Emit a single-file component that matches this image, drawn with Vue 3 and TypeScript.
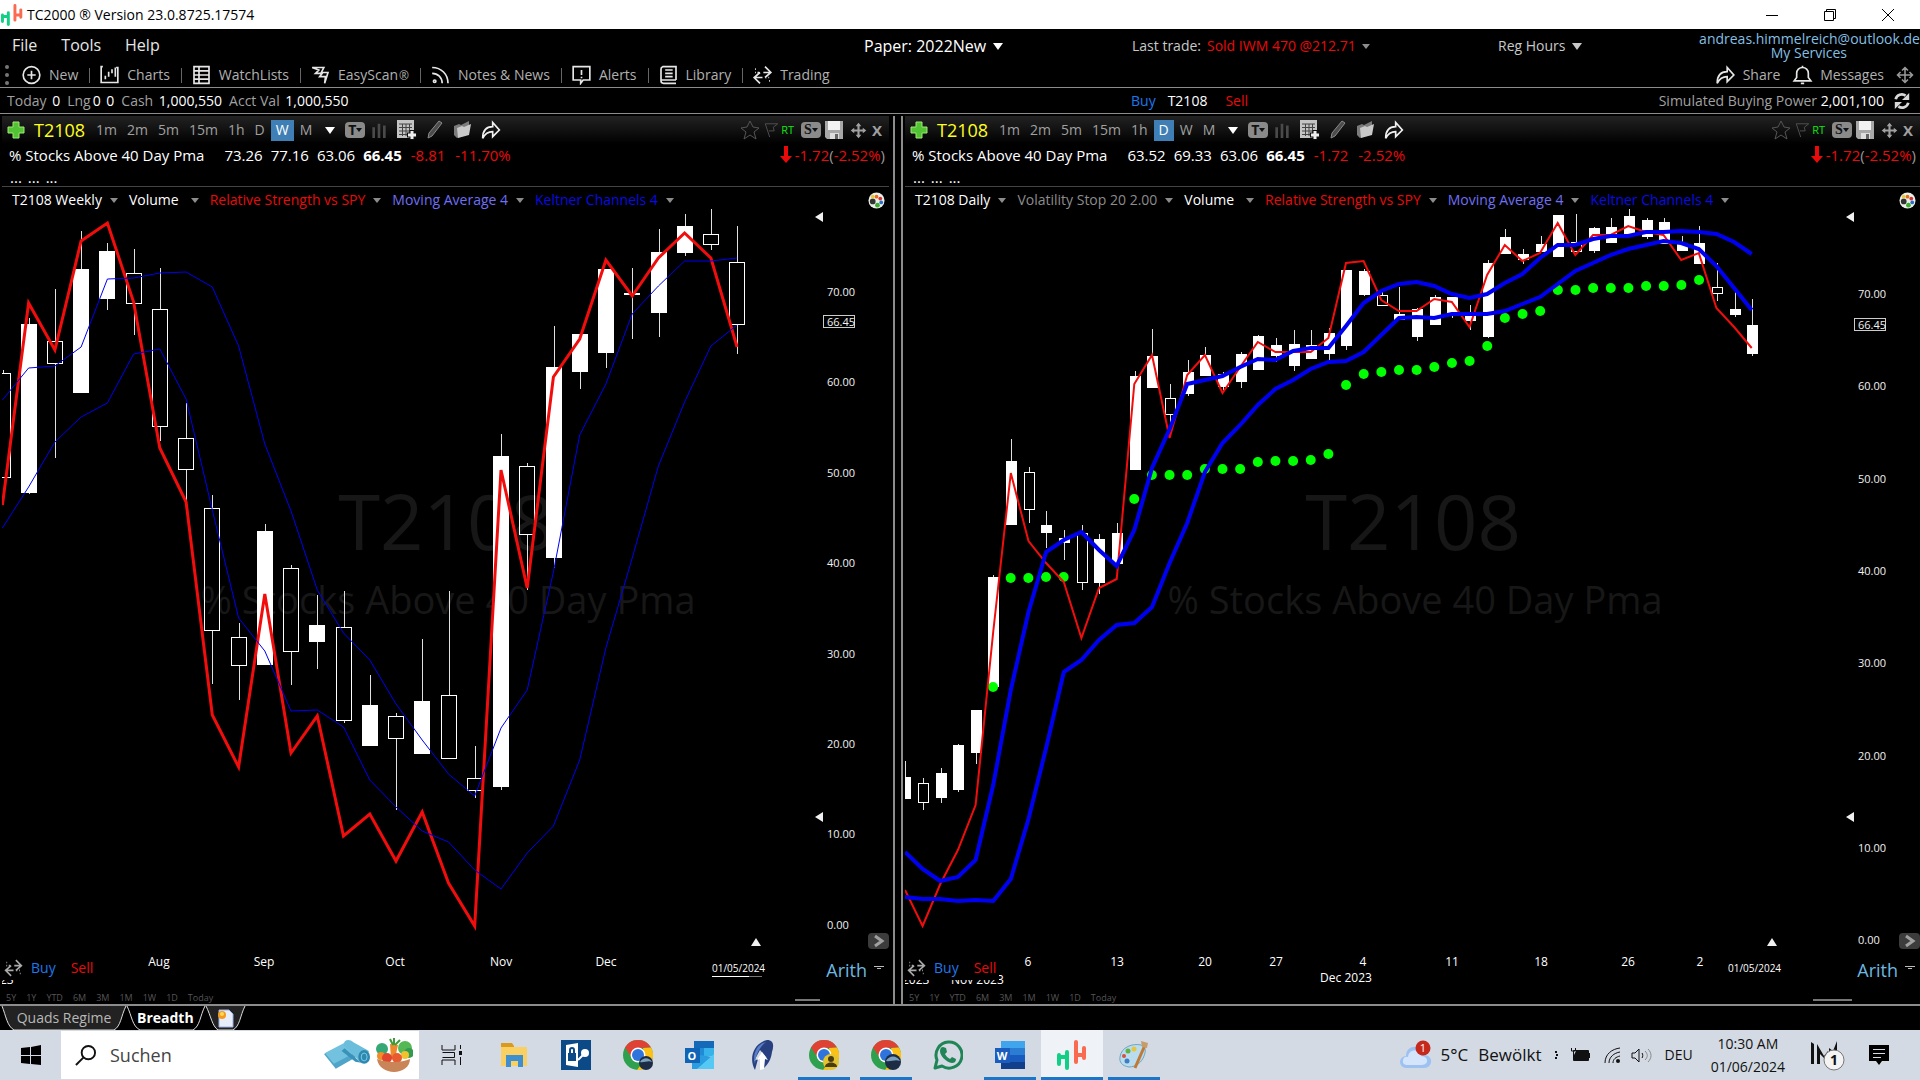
<script setup lang="ts">
type Candle = [high: number, top: number, bottom: number, low: number, hollow: 0 | 1]
interface Tick { at: number; text: string }
interface Legend { text: string; color: string; wide?: boolean }
interface Panel {
  id: string
  side: 'left' | 'right'
  active: string
  quotes: string[]
  last: string
  change: string[]
  legend: Legend[]
  view: string
  origin: number
  step: number
  body: number
  candles: Candle[]
  strength: string
  bands: string[]
  bandWidth: number
  strengthWidth: number
  stops: [number, number][]
  mark: { x: number; sub: number }
  axisX: number
  axis: Tick[]
  lastY: number
  dates: Tick[]
  month?: Tick
  cut: Tick[]
  dateX: number
  handle: { x: number; w: number }
}

const frames = ['1m', '2m', '5m', '15m', '1h', 'D', 'W', 'M']
const ranges = ['5Y', '1Y', 'YTD', '6M', '3M', '1M', '1W', '1D', 'Today']

/* Joins a list of heights to evenly spaced x positions. */
function line(origin: number, step: number, ys: number[]): string {
  return ys.map((y, i) => `${(origin + i * step).toFixed(1)},${y}`).join(' ')
}
function scale(first: number, gap: number): Tick[] {
  return [70, 60, 50, 40, 30, 20, 10, 0].map((v, i) => ({ at: Math.round(first + gap * i), text: v.toFixed(2) }))
}

const weekly: Candle[] = [
  [370, 373, 477, 477, 1], [318, 324, 493, 494, 0], [289, 341, 363, 458, 1], [231, 269, 393, 393, 0],
  [243, 251, 299, 310, 0], [249, 273, 303, 335, 1], [268, 309, 426, 441, 1], [403, 438, 469, 505, 1],
  [495, 508, 630, 684, 1], [623, 637, 665, 700, 1], [524, 531, 665, 665, 0], [565, 568, 651, 685, 1],
  [595, 625, 642, 669, 0], [591, 627, 720, 723, 1], [675, 705, 746, 746, 0], [713, 716, 738, 810, 1],
  [639, 701, 754, 754, 0], [591, 695, 758, 758, 1], [746, 778, 790, 798, 1], [434, 456, 787, 790, 0],
  [463, 466, 534, 590, 1], [326, 367, 558, 568, 0], [334, 334, 372, 389, 0], [269, 269, 353, 368, 0],
  [268, 293, 295, 339, 0], [229, 252, 313, 337, 0], [214, 226, 253, 256, 0], [209, 234, 244, 250, 1],
  [226, 262, 324, 354, 1],
]
const daily: Candle[] = [
  [761, 777, 799, 799, 0], [778, 783, 802, 810, 1], [768, 773, 798, 803, 0], [744, 745, 790, 792, 0],
  [710, 710, 753, 764, 0], [575, 577, 687, 687, 0], [439, 461, 525, 525, 0], [467, 472, 509, 523, 1],
  [511, 525, 533, 548, 0], [530, 538, 543, 560, 0], [525, 533, 582, 590, 1], [534, 539, 583, 594, 0],
  [523, 533, 564, 564, 0], [371, 376, 470, 470, 0], [329, 356, 388, 388, 0], [384, 398, 414, 429, 1],
  [360, 372, 394, 396, 0], [347, 355, 376, 376, 0], [372, 374, 387, 390, 0], [352, 354, 382, 388, 0],
  [335, 336, 370, 370, 0], [338, 345, 356, 362, 0], [330, 344, 366, 371, 0], [330, 345, 359, 359, 0],
  [328, 333, 354, 363, 0], [270, 270, 346, 350, 0], [269, 271, 295, 296, 0], [290, 295, 305, 306, 1],
  [287, 314, 320, 320, 0], [308, 309, 337, 341, 0], [295, 297, 325, 325, 0], [297, 297, 316, 318, 0],
  [305, 313, 321, 330, 0], [260, 263, 337, 338, 0], [229, 237, 254, 254, 0], [249, 254, 260, 264, 0],
  [236, 244, 252, 252, 0], [215, 215, 257, 257, 0], [214, 242, 251, 252, 1], [227, 228, 251, 253, 0],
  [218, 227, 243, 243, 0], [209, 216, 235, 235, 0], [218, 220, 237, 239, 0], [218, 222, 244, 244, 0],
  [236, 243, 251, 251, 0], [226, 243, 264, 264, 0], [263, 287, 293, 301, 1], [291, 309, 315, 317, 0],
  [299, 325, 354, 356, 0],
]
const stopYs: (number | null)[] = [
  null, null, null, null, null, 687, 578, 578, 577, 577, null, null, null, 499, 475, 475, 475, 469, 469, 469,
  462, 461, 461, 460, 454, 385, 374, 372, 370, 370, 367, 363, 361, 346, 318, 314, 311, 290, 290, 288, 288, 288,
  286, 286, 285, 280,
]
const stops = stopYs
  .map((y, i): [number, number | null] => [904.8 + i * 17.65, y])
  .filter((p): p is [number, number] => p[1] !== null)

const W = { o: 2.4, s: 26.24 }
const D = { o: 905, s: 17.64 }

const panels: Panel[] = [
  {
    id: 'weekly', side: 'left', active: 'W',
    quotes: ['73.26', '77.16', '63.06'], last: '66.45', change: ['-8.81', '-11.70%'],
    legend: [
      { text: 'T2108 Weekly', color: '#ffffff' },
      { text: 'Volume', color: '#ffffff', wide: true },
      { text: 'Relative Strength vs SPY', color: '#ea0a0a' },
      { text: 'Moving Average 4', color: '#6f6ff5' },
      { text: 'Keltner Channels 4', color: '#0a0ae6' },
    ],
    view: '2 209 887 795', origin: 3, step: W.s, body: 16, candles: weekly,
    strength: line(W.o, W.s, [505, 303, 350, 241, 223, 302, 448, 502, 715, 767, 594, 753, 716, 836, 814, 861, 812, 883, 926, 470, 588, 377, 339, 260, 296, 258, 233, 258, 347]),
    bands: [
      line(W.o, W.s, [400, 368, 366, 347, 279, 278, 273, 272, 287, 346, 444, 511, 590, 633, 660, 704, 740, 774, 796, 728, 690, 572, 435, 384, 314, 286, 261, 261, 258]),
      line(W.o, W.s, [528, 487, 442, 417, 403, 354, 349, 399, 510, 618, 651, 711, 710, 727, 780, 807, 831, 842, 870, 889, 853, 826, 760, 648, 558, 466, 402, 346, 325]),
    ],
    bandWidth: 1, strengthWidth: 3, stops: [],
    mark: { x: 446, sub: 448 }, axisX: 827, axis: scale(292, 90.4), lastY: 322,
    dates: [{ at: 159, text: 'Aug' }, { at: 264, text: 'Sep' }, { at: 395, text: 'Oct' }, { at: 501, text: 'Nov' }, { at: 606, text: 'Dec' }],
    cut: [{ at: 0, text: '23' }], dateX: 712, handle: { x: 795, w: 25 },
  },
  {
    id: 'daily', side: 'right', active: 'D',
    quotes: ['63.52', '69.33', '63.06'], last: '66.45', change: ['-1.72', '-2.52%'],
    legend: [
      { text: 'T2108 Daily', color: '#ffffff' },
      { text: 'Volatility Stop 20 2.00', color: '#8c8c8c' },
      { text: 'Volume', color: '#ffffff', wide: true },
      { text: 'Relative Strength vs SPY', color: '#ea0a0a' },
      { text: 'Moving Average 4', color: '#6f6ff5' },
      { text: 'Keltner Channels 4', color: '#0a0ae6' },
    ],
    view: '905 209 1015 795', origin: 905.7, step: 17.65, body: 11, candles: daily,
    strength: line(D.o, D.s, [890, 926, 884, 850, 805, 632, 473, 541, 563, 582, 638, 588, 579, 384, 355, 438, 375, 355, 393, 367, 342, 352, 352, 352, 338, 263, 261, 300, 311, 311, 299, 302, 327, 275, 245, 261, 253, 223, 255, 235, 235, 226, 232, 235, 260, 253, 308, 327, 348]),
    bands: [
      line(D.o, D.s, [852, 869, 881, 877, 860, 785, 690, 612, 552, 540, 532, 550, 566, 530, 468, 429, 384, 380, 376, 367, 359, 360, 351, 348, 348, 326, 303, 291, 284, 282, 286, 294, 298, 294, 283, 274, 258, 245, 245, 239, 236, 236, 232, 232, 231, 232, 234, 242, 254]),
      line(D.o, D.s, [897, 899, 899, 901, 900, 901, 879, 819, 748, 672, 660, 640, 625, 623, 607, 563, 523, 472, 443, 425, 405, 389, 380, 369, 362, 361, 352, 335, 318, 317, 318, 314, 314, 314, 311, 304, 297, 284, 271, 263, 255, 249, 245, 241, 243, 249, 266, 288, 310]),
    ],
    bandWidth: 4, strengthWidth: 2, stops,
    mark: { x: 1413, sub: 1415 }, axisX: 1858, axis: scale(294, 92.3), lastY: 325,
    dates: [
      { at: 1028, text: '6' }, { at: 1117, text: '13' }, { at: 1205, text: '20' }, { at: 1276, text: '27' },
      { at: 1363, text: '4' }, { at: 1452, text: '11' }, { at: 1541, text: '18' }, { at: 1628, text: '26' }, { at: 1700, text: '2' },
    ],
    month: { at: 1346, text: 'Dec 2023' },
    cut: [{ at: 902, text: '2023' }, { at: 951, text: 'Nov 2023' }],
    dateX: 1728, handle: { x: 1813, w: 39 },
  },
]

const center = (p: Panel, i: number): number => Math.floor(p.origin + i * p.step)

interface Tool { name: string; icon: string; mark?: string }
const tools: Tool[] = [
  { name: 'New', icon: 'M12 2a10 10 0 1 0 0 20a10 10 0 1 0 0-20M12 7v10M7 12h10' },
  { name: 'Charts', icon: 'M4 2H2v19h20V3h-2M7 13v4M11 8v6M15 5v5M19 3v11' },
  { name: 'WatchLists', icon: 'M3 2h18v20H3zM3 7h18M3 12h18M3 17h18M9 2v20' },
  { name: 'EasyScan', mark: '®', icon: 'M2 3h14l-3 6h8l-4 13l1-8h-7l3 -4H6l4-4z' },
  { name: 'Notes & News', icon: 'M2 3c11 0 19 8 19 19M2 10c7 0 12 5 12 12M5 18a1 1 0 1 0 0 3a1 1 0 1 0 0-3' },
  { name: 'Alerts', icon: 'M2 2h20v16h-8l-3 4v-4H2zM12 6v6M12 14v2' },
  { name: 'Library', icon: 'M21 18V2H5a3 3 0 0 0-2 3v14a3 3 0 0 0 3 3h15M4 18h17M8 6h9M8 10h9M8 14h9' },
  { name: 'Trading', icon: 'M15 2l7 7l-7 6M22 9h-9M9 9l-7 6l7 7M2 15h10M3 9h1M6 9h2M15 15h2M19 15h1M20 19h1M3 5h1' },
]
</script>

<template>
  <div class="app">
    <header class="title">
      <svg class="logo" viewBox="0 0 30 30" aria-hidden="true">
        <path class="bull" d="M2 15v9M10 12v16M2 17h8" /><path class="bear" d="M19 2v20M27 8v10M19 15h8" />
      </svg>
      <h1>TC2000 ® Version 23.0.8725.17574</h1>
      <div class="win">
        <button aria-label="Minimize"><svg viewBox="0 0 12 12"><path d="M0 6.500h12" /></svg></button>
        <button aria-label="Restore"><svg viewBox="0 0 12 12"><path d="M.5 2.500h9v9h-9zM2.500 2.500v-2h9v9h-2" /></svg></button>
        <button aria-label="Close"><svg viewBox="0 0 12 12"><path d="M0 0l12 12M12 0L0 12" /></svg></button>
      </div>
    </header>

    <div class="menus">
      <nav class="menu"><button>File</button><button>Tools</button><button>Help</button></nav>
      <div class="pick paper">
        <select aria-label="Account"><option>Paper: 2022New</option></select><i class="caret"></i>
      </div>
      <button class="trade-note"><span>Last trade:</span><b>Sold IWM 470 @212.71</b><i class="caret dim"></i></button>
      <div class="pick hours">
        <select aria-label="Session"><option>Reg Hours</option></select><i class="caret"></i>
      </div>
      <div class="user"><a href="#">andreas.himmelreich@outlook.de</a><a href="#" class="services">My Services</a></div>
    </div>

    <div class="tools">
      <span class="grip"><i></i><i></i><i></i></span>
      <button v-for="t in tools" :key="t.name" class="tool">
        <svg viewBox="0 0 24 24" aria-hidden="true"><path :d="t.icon" /></svg>
        <span>{{ t.name }}<small v-if="t.mark">{{ t.mark }}</small></span>
      </button>
      <div class="tools-right">
        <button><svg viewBox="0 0 24 24"><path d="M2 22c0-9 4-14 12-14V3l8 9l-8 8v-6c-6 0-9 2-12 8z" /></svg>Share</button>
        <button><svg viewBox="0 0 24 24"><path d="M2 19h20l-3-4V10a7 7 0 0 0-14 0v5zM12 3V1M10 22h4" /></svg>Messages</button>
        <svg class="move" viewBox="0 0 24 24"><path d="M12 2v20M2 12h20M8 6l4-4l4 4M8 18l4 4l4-4M6 8l-4 4l4 4M18 8l4 4l-4 4" /></svg>
      </div>
    </div>

    <div class="account">
      <div class="figures">
        <span>Today <b>0</b></span><span>Lng<b>0</b> <b>0</b></span><span>Cash <b>1,000,550</b></span><span>Acct Val <b>1,000,550</b></span>
      </div>
      <div class="order"><button class="buy">Buy</button><span>T2108</span><button class="sell">Sell</button></div>
      <div class="power">
        <span>Simulated Buying Power <b>2,001,100</b></span>
        <button aria-label="Refresh"><svg viewBox="0 0 20 20"><path d="M3 8a7 7 0 0 1 11-4M17 12a7 7 0 0 1-11 4" /><path class="solid" d="M18 1v8h-8zM2 19v-8h8z" /></svg></button>
      </div>
    </div>

    <main class="workspace">
      <section v-for="p in panels" :key="p.id" class="panel" :class="p.side">
        <div class="bar">
          <svg class="plus" viewBox="0 0 18 18"><path d="M6 1h6v5h5v6h-5v5H6v-5H1V6h5z" /></svg>
          <button class="symbol">T2108</button>
          <div class="frames">
            <button v-for="f in frames" :key="f" :class="{ on: f === p.active }">{{ f }}</button>
          </div>
          <button class="more" aria-label="More time frames"><i class="caret"></i></button>
          <button class="chip">T<i></i></button>
          <svg class="bars" viewBox="0 0 16 18"><path d="M2 6v12M8 2v16M14 4v14" /></svg>
          <svg class="ic grid" viewBox="0 0 20 20">
            <path fill="#c4c4c4" d="M0 0h17v18H0z" /><path stroke="#444" stroke-width="1" d="M2 4h13M2 7.500h13M2 11h13M2 14.500h13M5.500 4v12M9 4v12M12.500 4v12" /><path stroke="#111" stroke-width="5" d="M15 10v10M10 15h10" /><path stroke="#eee" stroke-width="3" d="M15 11v8M11 15h8" />
          </svg>
          <svg class="ic pencil" viewBox="0 0 20 20"><path fill="#4c4c4c" stroke="#8a8a8a" d="M3 18l1-5L14 1l3 2L7 16z" /></svg>
          <svg class="ic" viewBox="0 0 20 20"><path fill="#7b7b7b" d="M1 6l5-2l2 1l8-4v13L4 18l-3-3z" /><path fill="#c9c9c9" d="M4 8l5-2l2 1l7-3l-2 11l-11 3z" /></svg>
          <svg class="ic share" viewBox="0 0 24 24"><path d="M2 22c0-9 4-14 12-14V3l8 9l-8 8v-6c-6 0-9 2-12 8z" /></svg>
          <span class="grow"></span>
          <svg class="ic star" viewBox="0 0 20 20"><path d="M10 1l3 6l6 1l-5 4l2 7l-6-4l-6 4l2-7l-5-4l6-1z" /></svg>
          <svg class="flag" viewBox="0 0 16 18"><path d="M1 2h14l-5 4l1 4H5M1 2l5 15" /></svg>
          <span class="rt">RT</span>
          <button class="chip serif">S<i></i></button>
          <svg class="save" viewBox="0 0 18 18"><path fill="#a8a8a8" d="M0 0h18v18H2L0 16z" /><path fill="#f2f2f2" d="M3 0h12v9H3z" /><path fill="#dedede" d="M5 12h9v6H5z" /><path fill="#666" d="M10 13h3v5h-3z" /></svg>
          <svg class="cross" viewBox="0 0 24 24"><path d="M12 3v18M3 12h18" /><path class="solid" d="M8 6l4-5l4 5zM8 18l4 5l4-5zM6 8l-5 4l5 4zM18 8l5 4l-5 4z" /></svg>
          <button class="close">X</button>
        </div>

        <div class="quote">
          <span>% Stocks Above 40 Day Pma</span>
          <span class="nums"><span v-for="q in p.quotes" :key="q">{{ q }}</span><b>{{ p.last }}</b></span>
          <span class="chg"><span v-for="c in p.change" :key="c">{{ c }}</span></span>
          <span class="grow"></span>
          <span class="net"><svg viewBox="0 0 12 18"><path d="M4 0h4v10h4l-6 7l-6-7h4z" /></svg>-1.72<em>(</em>-2.52%<em>)</em></span>
        </div>
        <div class="ellipses"><span>...</span><span>...</span><span>...</span></div>

        <div class="legend">
          <button v-for="l in p.legend" :key="l.text" :class="{ wide: l.wide }" :style="{ color: l.color }">{{ l.text }}<i class="caret dim"></i></button>
          <span class="grow"></span>
          <svg class="ball" viewBox="0 0 18 18">
            <circle cx="9" cy="9" r="8.500" fill="#e9efe9" /><circle cx="9" cy="5" r="2" fill="#e86a1c" /><circle cx="13" cy="7" r="2" fill="#d63232" /><circle cx="14" cy="11" r="2" fill="#2a6fd0" /><circle cx="10" cy="14" r="2.500" fill="#3cae32" /><circle cx="5" cy="10" r="3" fill="#333" /><circle cx="5" cy="5" r="2" fill="#e8c840" />
          </svg>
        </div>

        <div class="chart">
          <svg class="plot" :viewBox="p.view" role="img" aria-label="T2108 price chart">
            <g class="water"><text :x="p.mark.x" y="550" class="big">T2108</text><text :x="p.mark.sub" y="614" class="sub">% Stocks Above 40 Day Pma</text></g>
            <g v-for="(c, i) in p.candles" :key="i" class="candle">
              <path :d="`M${center(p, i) + 0.5} ${c[0]}V${c[1]}M${center(p, i) + 0.5} ${c[2]}V${c[3]}`" />
              <rect v-if="c[4]" :x="center(p, i) - p.body / 2 + (p.body % 2 ? 1 : 0.5)" :y="c[1] + 0.5" :width="p.body - 1" :height="c[2] - c[1]" class="hollow" />
              <rect v-else :x="center(p, i) - p.body / 2 + (p.body % 2 ? 0.5 : 0)" :y="c[1]" :width="p.body" :height="c[2] - c[1]" class="full" />
            </g>
            <circle v-for="(s, i) in p.stops" :key="'s' + i" :cx="s[0]" :cy="s[1]" r="5" fill="#00ff00" />
            <polyline :points="p.strength" class="strength" :stroke-width="p.strengthWidth" />
            <polyline v-for="(b, i) in p.bands" :key="'b' + i" :points="b" class="band" :stroke-width="p.bandWidth" />

            <g class="axis">
              <text v-for="t in p.axis" :key="t.text" :x="p.axisX" :y="t.at + 4">{{ t.text }}</text>
              <rect :x="p.axisX - 3.5" :y="p.lastY - 6.5" width="31" height="12" class="tag" />
              <text :x="p.axisX" :y="p.lastY + 4">66.45</text>
              <path :d="`M${p.axisX - 4} 212v10l-8-5zM${p.axisX - 4} 812v10l-8-5z`" />
              <path :d="`M${p.dateX + 39} 946h10l-5-8z`" />
            </g>
            <g class="dates">
              <text v-for="d in p.dates" :key="d.text" :x="d.at" y="966">{{ d.text }}</text>
              <text v-if="p.month" :x="p.month.at" y="982">{{ p.month.text }}</text>
              <text v-for="d in p.cut" :key="d.text" :x="d.at" y="984" class="start">{{ d.text }}</text>
              <text :x="p.dateX" y="972" class="today">01/05/2024</text>
            </g>
            <g v-if="p.side === 'left'"><path d="M712 976.500h37" stroke="#fff" /><path d="M749 976.500h13" stroke="#777" /></g>
            <rect :x="p.handle.x" y="999" :width="p.handle.w" height="2" fill="#777" />
          </svg>
          <div class="trade">
            <svg viewBox="0 0 24 24"><path :d="tools[7].icon" /></svg>
            <button class="buy">Buy</button><button class="sell">Sell</button>
          </div>
          <div class="ranges"><button v-for="r in ranges" :key="r">{{ r }}</button></div>
          <button class="expand" aria-label="Expand"><svg viewBox="0 0 21 16"><path d="M7 3l7 5l-7 5" /></svg></button>
          <button class="arith">Arith<i></i></button>
        </div>
      </section>
    </main>

    <nav class="tabs">
      <svg class="shape" viewBox="0 0 250 25" aria-hidden="true">
        <path class="off" d="M2 0C6 10 7 20 14 24H114C121 20 121 10 126 0" />
        <path class="off" d="M206 0C211 10 212 20 218 24H233C240 20 240 10 245 0" />
        <path class="on" d="M127 0C132 10 132 20 140 24H193C200 20 200 10 205 0" />
      </svg>
      <button class="quads">Quads Regime</button>
      <button class="breadth">Breadth</button>
      <button class="page" aria-label="New layout"><svg viewBox="0 0 16 19"><path fill="#e8edfa" stroke="#9ab0e0" d="M1 1h10l4 4v13H1z" /><circle cx="4" cy="6" r="4" fill="#f59a1c" /><circle cx="4" cy="5" r="2" fill="#ffd95a" /></svg></button>
    </nav>

    <footer class="taskbar">
      <button class="start-btn" aria-label="Start"><svg viewBox="0 0 20 20"><path d="M0 3l9-1v8H0zM10 2l10-2v10H10zM0 11h9v8l-9-1zM10 11h10v9l-10-1z" /></svg></button>
      <label class="search">
        <svg class="lens" viewBox="0 0 22 22"><circle cx="14" cy="8" r="7" /><path d="M9 13l-8 8" /></svg>
        <input type="search" placeholder="Suchen" aria-label="Suchen" />
        <svg class="mat" viewBox="0 0 48 32"><path fill="#4fa5c9" d="M18 6L0 15l12 15l21-12z" /><path fill="#72c2df" d="M20 4L1 14l9 11l21-11z" /><path fill="#6bbedb" d="M20 6c0-6 6-7 10-3l16 9l-8 12z" /><path fill="#3992b9" d="M21 9l17 15l-6-1l-14-11z" /><ellipse cx="41" cy="18" rx="6" ry="7" fill="#2f88b0" /><ellipse cx="41" cy="18" rx="3" ry="4" fill="none" stroke="#7acce5" /></svg>
        <svg class="basket" viewBox="0 0 38 34"><circle cx="7" cy="11" r="6" fill="#35a876" /><circle cx="30" cy="10" r="7" fill="#54b857" /><circle cx="34" cy="15" r="5" fill="#339b4e" /><path fill="#ef8a2c" d="M15 6l8 1l-3 14h-4z" /><path stroke="#3e9c3a" stroke-width="2" d="M18 7l-3-6M19 7V0M20 7l5-5" /><circle cx="30" cy="17" r="4" fill="#f2c12e" /><circle cx="6" cy="18" r="4" fill="#f08d28" /><circle cx="12" cy="20" r="5" fill="#e0452d" /><circle cx="22" cy="20" r="5" fill="#e85a30" /><path fill="#c98458" d="M2 21c10 4 24 4 33 0c0 8-8 13-16 13S3 29 2 21z" /></svg>
      </label>
      <div class="apps">
        <button aria-label="Task view"><svg viewBox="0 0 30 30"><path class="ink" d="M5 5v5h13V5M5 25v-5h13v5M5.500 12.500h12v5h-12M23.500 5v4M23.500 17v8" /><path d="M22 11h3v4h-3z" /></svg></button>
        <button aria-label="Explorer"><svg viewBox="0 0 30 30"><path fill="#d99a1e" d="M2 3h11l2 3v5H2z" /><path fill="#fbd062" d="M2 7h26v19H2z" /><path fill="#3d8fd0" d="M7 15h17v12h-5v-6h-7v6H7z" /></svg></button>
        <button aria-label="Password safe"><svg viewBox="0 0 30 30"><path fill="#0b4a86" d="M0 0h30v30H0z" /><path fill="#fff" d="M5 5l12-2v24L5 25z" /><path fill="#0b4a86" d="M7 13h8v8H7z" /><path fill="none" stroke="#0b4a86" stroke-width="2" d="M9 13v-3a2 2 0 0 1 4 0v3" /><circle cx="24" cy="13" r="4" fill="#fff" /><path stroke="#fff" stroke-width="2" d="M22 15l-5 5" /></svg></button>
        <button aria-label="Chrome"><svg viewBox="0 0 30 30"><circle cx="15" cy="15" r="15" fill="#2fa04e" /><path fill="#df4234" d="M2 7.500A15 15 0 0 1 28 7.500L15 8zM2 7.500L9 18L15 8z" /><path fill="#fbc116" d="M28 7.500A15 15 0 0 1 14 30l8-11l-2-11z" /><circle cx="15" cy="15" r="7.500" fill="#fff" /><circle cx="15" cy="15" r="6" fill="#2f73dc" /><circle cx="23" cy="23" r="7" fill="#1b2c44" /><path fill="#7ba0bd" d="M17 22c3-5 9-5 12 0c-4-2-8 1-12 0z" /></svg></button>
        <button aria-label="Outlook"><svg viewBox="0 0 30 30"><path fill="#1469b8" d="M9 1h20v14H9z" /><path fill="#37b3ea" d="M19 8h10v8H19z" /><path fill="#1f8ad6" d="M9 8h10v8H9z" /><path fill="#2a9de0" d="M7 14l22 3v12H7z" /><path fill="#55c9f3" d="M29 14L12 29h17z" /><path fill="#0f64b5" d="M0 8h15v15H0z" /><text x="7" y="20">O</text></svg></button>
        <button aria-label="Feather"><svg viewBox="0 0 30 30"><path fill="#28407f" d="M8 30C2 20 5 4 20 0c7 0 7 6 5 12c-1 8-4 12-8 16V16l3 2l-7-8l-6 11l4-2z" /><path fill="#5a7fc8" d="M8 24C5 14 10 4 19 2C13 7 9 13 8 24z" /><path fill="#fff" d="M15 12l6 8l-3-1l-1 10l-4 1v-11l-3 1z" /></svg></button>
        <button class="open" aria-label="Chrome profile"><svg viewBox="0 0 30 30"><circle cx="15" cy="15" r="15" fill="#2fa04e" /><path fill="#df4234" d="M2 7.500A15 15 0 0 1 28 7.500L15 8zM2 7.500L9 18L15 8z" /><path fill="#fbc116" d="M28 7.500A15 15 0 0 1 14 30l8-11l-2-11z" /><circle cx="15" cy="15" r="7.500" fill="#fff" /><circle cx="15" cy="15" r="6" fill="#2f73dc" /><circle cx="22" cy="22" r="8" fill="#e4c52e" /><circle cx="22" cy="19" r="3" fill="#4a3c12" /><path fill="#4a3c12" d="M16 27c0-6 12-6 12 0z" /></svg></button>
        <button class="open" aria-label="Chrome work"><svg viewBox="0 0 30 30"><circle cx="15" cy="15" r="15" fill="#2fa04e" /><path fill="#df4234" d="M2 7.500A15 15 0 0 1 28 7.500L15 8zM2 7.500L9 18L15 8z" /><path fill="#fbc116" d="M28 7.500A15 15 0 0 1 14 30l8-11l-2-11z" /><circle cx="15" cy="15" r="7.500" fill="#fff" /><circle cx="15" cy="15" r="6" fill="#2f73dc" /><circle cx="22" cy="22" r="8" fill="#1b2c44" /><path fill="#7ba0bd" d="M15 21c3-6 11-6 14 0c-5-2-9 1-14 0z" /></svg></button>
        <button aria-label="WhatsApp"><svg viewBox="0 0 30 30"><path fill="none" stroke="#1f8556" stroke-width="3" d="M2 28l2-8a13 13 0 1 1 5 6z" /><path fill="#1f8556" d="M10 7l3 1l1 4l-2 2c1 2 3 4 5 5l2-2l4 2c0 3-2 4-4 4c-6-1-12-7-12-12c0-2 1-4 3-4z" /></svg></button>
        <button class="open" aria-label="Word"><svg viewBox="0 0 30 30"><path fill="#41a5ee" d="M6 1h24v8H6z" /><path fill="#2b7cd3" d="M6 8h24v7H6z" /><path fill="#185abd" d="M6 15h24v7H6z" /><path fill="#123f8c" d="M6 22h24v7H6z" /><path fill="#1a5dbe" d="M0 8h15v15H0z" /><text x="7" y="20">W</text></svg></button>
        <button class="open current" aria-label="TC2000"><svg viewBox="0 0 30 30"><path class="bull" d="M2 15v9M10 12v16M2 17h8" /><path class="bear" d="M19 2v20M27 8v10M19 15h8" /></svg></button>
        <button class="open" aria-label="Paint"><svg viewBox="0 0 30 30"><path fill="#b9dcee" stroke="#6ba6c4" d="M1 17C2 7 14 3 22 5c5 2 5 6 3 11c-2 6-8 11-15 11c-7-1-10-5-9-10z" /><circle cx="9" cy="11" r="2.500" fill="#63b045" /><circle cx="15" cy="9" r="2.500" fill="#e8c63c" /><circle cx="5" cy="16" r="2" fill="#d8503c" /><circle cx="8" cy="21" r="2.500" fill="#3d7dc6" /><path stroke="#c07a38" stroke-width="3" d="M26 5L16 28" /><path fill="#c89b6a" d="M22 1l7 2l-1 5l-5-1z" /></svg></button>
      </div>
      <div class="tray">
        <button class="weather">
          <svg viewBox="0 0 34 30"><path fill="#9dc2f2" d="M7 28a6 6 0 0 1 0-12c0-12 17-12 18-1c10 0 9 13 0 13z" /><path fill="#d3e4fb" d="M7 25a4 4 0 0 1 2-8c1-9 12-8 13-1c8 0 8 9 1 9z" /><circle cx="24" cy="8" r="7.500" fill="#c6281c" /><text x="24" y="12">1</text></svg>
          <span>5°C</span><span>Bewölkt</span>
        </button>
        <svg class="dots" viewBox="0 0 28 16"><path d="M13 4h2v2h-2zM14 7h2v2h-2zM13 10h2v2h-2z" /></svg>
        <svg class="t battery" viewBox="0 0 21 16"><path d="M6 4h12v9H4V8" /><path class="ink" d="M3.500 3.500h15v10h-15zM19.500 6v5M1.500 1v3h4V1M3.500 4v4" /></svg>
        <svg class="t wifi" viewBox="0 0 17 17"><path class="ink" d="M1 16C1 7 8 2 16 1M5 16c0-6 5-10 11-11M9 16c0-4 3-6 7-7" /><circle cx="14" cy="14" r="2" /></svg>
        <svg class="t sound" viewBox="0 0 21 17"><path class="ink" d="M1 6v5h3l4 4V2L4 6zM11 6c1 1 1 4 0 5" /><path class="ink faint" d="M14 4c3 3 3 6 0 9M17 2c4 4 4 9 0 13" /></svg>
        <span class="lang">DEU</span>
        <div class="clock"><span>10:30 AM</span><span>01/06/2024</span></div>
        <svg class="msi" viewBox="0 0 36 32"><path d="M1 3l3 2v20H1zM7 5l7 12l4-5V25h-3v-5l-5-5v10H7zM27 2v12l-8 6V9l4 3z" /><circle cx="24" cy="21" r="10" /><text x="24" y="26">1</text></svg>
        <button class="note" aria-label="Notifications"><svg viewBox="0 0 20 20"><path d="M0 0h20v16h-7l-3 4l-3-4H0z" /><path stroke="#d3dae3" stroke-width="1" d="M4 4.500h12M4 8.500h12M4 12.500h8" /></svg></button>
      </div>
    </footer>
  </div>
</template>

<style>
body { background: #000; }
</style>

<style scoped>
.app { display: flex; flex-direction: column; min-height: 100vh; background: #000; color: #fff; font-family: "Open Sans", "Noto Sans", sans-serif; font-size: 14px; line-height: 20px; overflow: hidden; }
.app *, .app { box-sizing: border-box; }
button, select, input { font: inherit; color: inherit; background: none; border: 0; padding: 0; margin: 0; }
button { white-space: nowrap; }
a { text-decoration: none; }
svg { display: block; flex: none; fill: none; }
.grow { flex: 1; }
.caret { display: inline-block; border: 5px solid transparent; border-top: 7px solid currentColor; border-bottom: 0; }
.caret.dim { border-width: 5px 4px 0; color: #8c8c8c; }
.bull { stroke: #12cf86; stroke-width: 4; stroke-linecap: round; }
.bear { stroke: #f96a51; stroke-width: 4; stroke-linecap: round; }

.title { display: flex; align-items: center; height: 29px; background: #fff; color: #000; padding-right: 3px; }
.logo { width: 22px; height: 22px; margin: 0 4px 0 1px; }
.title h1 { font-size: 14px; font-weight: 400; margin: 0; flex: 1; }
.win { display: flex; }
.win button { width: 58px; height: 28px; display: grid; place-items: center; }
.win svg { width: 12px; height: 12px; stroke: #000; }

.menus { display: grid; grid-template-columns: 864fr 268fr 366fr 142fr 280fr; align-items: center; height: 34px; }
.menu { display: flex; gap: 24px; padding: 0 0 2px 12px; font-size: 16px; color: #e6e6e6; }
.pick { display: flex; align-items: center; gap: 4px; }
.pick select { appearance: none; }
.paper { font-size: 16px; }
.paper select { width: 125px; }
.hours { color: #c8c8c8; }
.hours select { width: 70px; }
.trade-note { display: flex; align-items: center; gap: 6px; color: #c8c8c8; }
.trade-note b { font-weight: 400; color: #ea0a0a; }
.user { display: flex; flex-direction: column; align-items: flex-end; line-height: 14px; }
.user a { color: #85bfe0; }
.services { padding-right: 73px; }

.tools { display: flex; align-items: center; height: 25px; border-bottom: 1px solid #8c8c8c; color: #b0b0b0; }
.grip { display: flex; flex-direction: column; gap: 4px; padding: 0 12px 0 5px; }
.grip i { width: 4px; height: 4px; border-radius: 50%; background: #777; }
.tool { display: flex; align-items: center; gap: 7px; }
.tool svg, .tools-right svg { width: 21px; height: 20px; stroke: #e6e6e6; stroke-width: 2; }
.tool + .tool::before { content: ""; width: 1px; height: 15px; background: #666; margin: 0 2px 0 11px; }
.tool small { font-size: 12px; margin-left: 1px; }
.tools-right { display: flex; align-items: center; gap: 12px; margin-left: auto; padding-right: 6px; }
.tools-right button { display: flex; align-items: center; gap: 7px; }
.tools-right .move { width: 18px; height: 18px; stroke: #999; }

.account { display: grid; grid-template-columns: 1131fr 525fr 264fr; align-items: center; height: 26px; border-bottom: 1px solid #8c8c8c; color: #a0a0a0; white-space: nowrap; }
.account b { font-weight: 400; color: #fff; }
.figures { display: flex; gap: 7px; padding-left: 7px; }
.figures b { margin-left: 2px; }
.order { display: flex; gap: 12px; color: #fff; }
.order .sell { margin-left: 6px; }
.buy { color: #1d78ee; }
.sell { color: #ea0a0a; }
.power { display: flex; justify-content: flex-end; align-items: center; gap: 9px; padding-right: 9px; }
.power svg { width: 18px; height: 18px; stroke: #d8d8d8; stroke-width: 3; }
.solid { fill: #d8d8d8; stroke: none; }

.workspace { display: grid; grid-template-columns: minmax(0, 895fr) minmax(0, 1019fr); gap: 6px; padding-top: 2px; border-bottom: 2px solid #8c8c8c; }
.panel.left { border-right: 2px solid #8c8c8c; padding: 0 4px 0 2px; }
.panel.right { border-left: 2px solid #8c8c8c; padding-left: 2px; }
.bar { display: flex; align-items: center; height: 28px; background: linear-gradient(#222, #000); padding: 0 6px 0 5px; color: #a0a0a0; }
.plus { width: 18px; height: 18px; fill: #52c433; stroke: #a0ea78; margin-right: 9px; }
.symbol { color: #ffff1c; font-size: 18px; }
.frames { display: flex; margin: 0 8px 0 6px; }
.frames button { padding: 0 5px; height: 21px; }
.frames .on { background: #3f7fb5; color: #fff; margin: 0 1px; }
.more { color: #fff; display: flex; margin-right: 10px; }
.chip { width: 20px; height: 16px; border-radius: 4px; background: #8a8a8a; color: #111; font-weight: 700; line-height: 16px; display: flex; align-items: center; justify-content: center; }
.chip i { border: 3px solid transparent; border-top: 4px solid #111; border-bottom: 0; }
.chip.serif { font-family: "Liberation Serif", serif; margin: 0 4px 0 7px; }
.bars { width: 16px; height: 16px; stroke: #4a4a4a; stroke-width: 3; margin: 0 10px 0 6px; }
.ic { width: 20px; height: 20px; margin-right: 8px; }
.share { stroke: #f0f0f0; stroke-width: 2; }
.star { stroke: #555; margin-right: 4px; }
.flag { width: 15px; height: 16px; stroke: #555; margin-right: 2px; }
.rt { color: #10e810; font-size: 11px; }
.save { width: 18px; height: 18px; margin-right: 7px; }
.cross { width: 17px; height: 17px; stroke: #a0a0a0; stroke-width: 3; margin-right: 4px; }
.cross .solid { fill: #a0a0a0; }
.close { font-weight: 700; font-size: 15px; width: 12px; }

.quote { display: flex; align-items: center; height: 21px; padding: 0 4px 0 7px; font-size: 15px; white-space: nowrap; }
.nums { display: flex; gap: 8px; margin: 0 9px 0 20px; }
.chg { display: flex; gap: 10px; color: #ea0a0a; }
.net { display: flex; align-items: center; color: #ea0a0a; }
.net svg { width: 12px; height: 18px; fill: #ea0a0a; margin-right: 3px; }
.net em { color: #999; font-style: normal; }
.ellipses { display: flex; gap: 6px; height: 22px; padding-left: 8px; line-height: 24px; font-size: 15px; border-bottom: 1px solid #444; }
.legend { display: flex; align-items: center; gap: 11px; height: 22px; padding: 4px 4px 0 10px; white-space: nowrap; }
.legend button { display: flex; align-items: center; gap: 8px; }
.legend .wide { gap: 12px; }
.ball { width: 17px; height: 17px; }

.chart { position: relative; }
.plot { width: 100%; height: auto; }
.water { fill: #171717; text-anchor: middle; }
.big { font-size: 76px; }
.sub { font-size: 38px; }
.candle path { stroke: #e0e0e0; }
.hollow { stroke: #fff; }
.full { fill: #fff; }
.strength { stroke: #f20d0d; stroke-linejoin: miter; }
.band { stroke: #0000f0; }
.axis { fill: #f0f0f0; font-size: 11px; }
.axis .tag { stroke: #ccc; fill: none; }
.dates { fill: #fff; font-size: 12px; text-anchor: middle; }
.dates .start, .dates .today { text-anchor: start; }
.dates .today { font-size: 10px; }
.trade { position: absolute; left: 0; bottom: 24px; height: 28px; display: flex; align-items: center; gap: 15px; background: #000; padding: 4px 3px 0 2px; }
.trade svg { width: 19px; height: 20px; stroke: #aaa; stroke-width: 2; margin-right: -7px; }
.ranges { position: absolute; left: 4px; bottom: 0; display: flex; gap: 10px; height: 12px; color: #555; font-size: 9px; line-height: 12px; }
.expand { position: absolute; right: 0; bottom: 55px; width: 21px; height: 16px; border-radius: 4px; background: #3c3c3c; }
.expand svg { width: 21px; height: 16px; stroke: #a0a0a0; stroke-width: 3; }
.arith { position: absolute; right: 5px; bottom: 22px; display: flex; gap: 7px; color: #6cb8e0; font-size: 18px; line-height: 24px; }
.arith i { width: 10px; height: 1px; margin-top: 8px; background: #bbb; position: relative; }
.arith i::after { content: ""; position: absolute; left: 3px; right: 3px; top: 2px; height: 1px; background: #bbb; }

.tabs { position: relative; display: flex; align-items: center; height: 24px; flex: 1 0 auto; }
.shape { position: absolute; left: 0; top: 0; width: 250px; height: 25px; stroke: #ddd; }
.off { fill: #222; }
.shape .on { fill: #000; }
.tabs button { position: relative; }
.quads { color: #b8b8b8; margin-left: 16px; min-width: 96px; }
.breadth { font-weight: 700; margin-left: 25px; min-width: 55px; }
.page { margin-left: 24px; }
.page svg { width: 16px; height: 19px; }

.taskbar { display: flex; align-items: center; height: 50px; background: #d3dae3; color: #111; }
.start-btn { width: 61px; display: grid; place-items: center; }
.start-btn svg { width: 20px; height: 20px; fill: #000; }
.search { display: flex; align-items: center; width: 358px; height: 48px; background: #fff; padding: 0 6px 0 14px; }
.lens { width: 21px; height: 21px; stroke: #111; stroke-width: 2; }
.search input { flex: 1; min-width: 0; margin-left: 14px; font-size: 18px; outline: 0; }
.search input::placeholder { color: #444; opacity: 1; }
.mat { width: 47px; height: 32px; margin-right: 4px; }
.basket { width: 38px; height: 34px; }
.apps { display: flex; height: 50px; margin-left: 2px; }
.apps button { width: 62px; display: grid; place-items: center; position: relative; }
.apps svg { width: 30px; height: 30px; }
.apps path { stroke-linejoin: round; }
.ink { fill: none; stroke: #111; stroke-width: 1; }
.apps svg > path:not([class]):not([fill]):not([stroke]) { fill: #111; }
.apps text { fill: #fff; font-size: 11px; font-weight: 700; text-anchor: middle; }
.open::after { content: ""; position: absolute; left: 5px; right: 5px; bottom: 0; height: 3px; background: #1976c8; }
.current { background: #eff2f6; }
.current::after { left: 0; right: 0; }
.tray { display: flex; align-items: center; margin-left: auto; height: 50px; padding-right: 31px; }
.weather { display: flex; align-items: center; gap: 10px; font-size: 17px; }
.weather svg { width: 34px; height: 30px; margin-right: -2px; }
.weather text { fill: #fff; font-size: 11px; text-anchor: middle; }
.dots { width: 28px; height: 16px; fill: #111; }
.t { fill: #111; }
.battery { width: 21px; height: 16px; margin-right: 13px; }
.wifi { width: 17px; height: 17px; margin-right: 10px; }
.sound { width: 21px; height: 17px; margin-right: 13px; }
.faint { stroke: #888; }
.clock { display: flex; flex-direction: column; align-items: center; line-height: 23px; margin: 0 25px 0 18px; }
.msi { width: 36px; height: 32px; fill: #111; margin-right: 23px; }
.msi circle { fill: #f4f4f4; stroke: #777; }
.msi text { font-size: 14px; font-weight: 700; text-anchor: middle; }
.note svg { width: 20px; height: 20px; fill: #000; }
</style>
